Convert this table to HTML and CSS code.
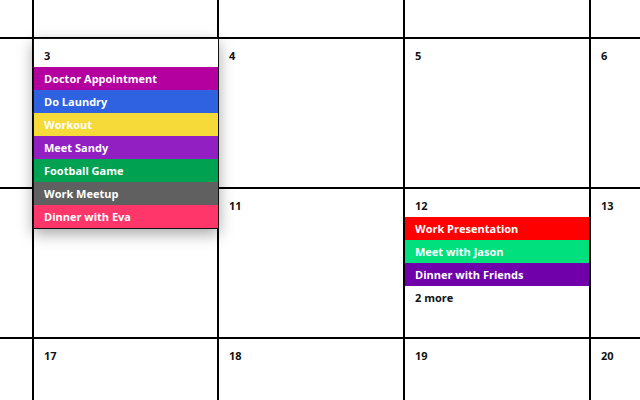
FILE: index.html
```html
<!DOCTYPE html>
<html>
<head>
<meta charset="utf-8">
<link rel="stylesheet" href="styles.css">
</head>
<body>
<div class="calendar">
  <div class="cell"></div>
  <div class="cell"></div>
  <div class="cell"></div>
  <div class="cell"></div>
  <div class="cell"></div>

  <div class="cell"></div>
  <div class="cell open">
    <div class="popover">
      <div class="day">3</div>
      <div class="event c-doctor">Doctor Appointment</div>
      <div class="event c-laundry">Do Laundry</div>
      <div class="event c-workout">Workout</div>
      <div class="event c-sandy">Meet Sandy</div>
      <div class="event c-football">Football Game</div>
      <div class="event c-meetup">Work Meetup</div>
      <div class="event c-eva">Dinner with Eva</div>
    </div>
  </div>
  <div class="cell"><div class="day">4</div></div>
  <div class="cell"><div class="day">5</div></div>
  <div class="cell"><div class="day">6</div></div>

  <div class="cell"></div>
  <div class="cell"></div>
  <div class="cell"><div class="day">11</div></div>
  <div class="cell">
    <div class="day">12</div>
    <div class="event c-present">Work Presentation</div>
    <div class="event c-jason">Meet with Jason</div>
    <div class="event c-friends">Dinner with Friends</div>
    <div class="more">2 more</div>
  </div>
  <div class="cell"><div class="day">13</div></div>

  <div class="cell"></div>
  <div class="cell"><div class="day">17</div></div>
  <div class="cell"><div class="day">18</div></div>
  <div class="cell"><div class="day">19</div></div>
  <div class="cell"><div class="day">20</div></div>
</div>
</body>
</html>
```
FILE: styles.css
```css
html, body {
  margin: 0;
  padding: 0;
  width: 640px;
  height: 400px;
  overflow: hidden;
  background: #fff;
}

body {
  font-family: "Open Sans", "Noto Sans", sans-serif;
  font-weight: 700;
  font-size: 11px;
  color: #111;
}

.calendar {
  display: grid;
  grid-template-columns: 32px 183px 184px 184px 1fr;
  grid-template-rows: 37px 148px 148px 1fr;
  gap: 2px;
  background: #000;
  width: 640px;
  height: 400px;
}

.cell {
  background: #fff;
  padding-top: 8px;
  box-sizing: border-box;
  min-width: 0;
}

.cell.open {
  position: relative;
}

.day {
  height: 20px;
  line-height: 18px;
  padding-left: 10px;
}

.event {
  height: 23px;
  line-height: 23px;
  padding-left: 10px;
  color: #fff;
  white-space: nowrap;
  overflow: hidden;
}

.more {
  height: 23px;
  line-height: 23px;
  padding-left: 10px;
}

.popover {
  position: absolute;
  top: -1px;
  left: -1px;
  right: -2px;
  z-index: 2;
  background: #fff;
  border: 1px solid #111;
  padding-top: 8px;
  box-shadow: 0 5px 14px rgba(0, 0, 0, 0.35);
}

.c-doctor { background: #b3009f; }
.c-laundry { background: #2f62e0; }
.c-workout { background: #f5da3a; }
.c-sandy { background: #911fc2; }
.c-football { background: #00a151; }
.c-meetup { background: #606060; }
.c-eva { background: #fe3669; }
.c-present { background: #ff0000; }
.c-jason { background: #00e17e; }
.c-friends { background: #7000aa; }
```
